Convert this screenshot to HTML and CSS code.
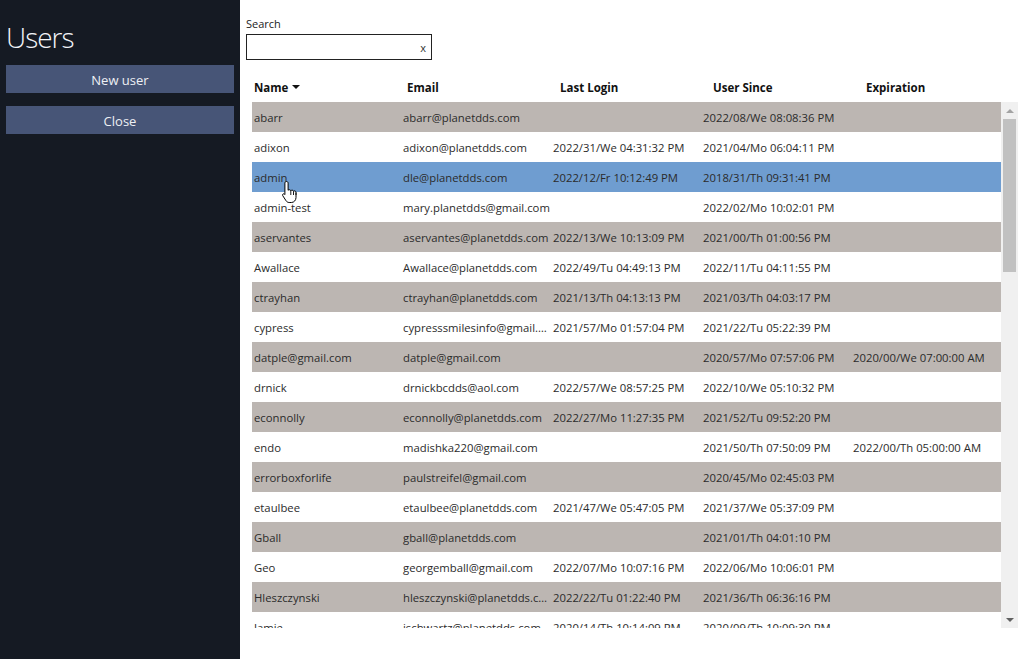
FILE: index.html
```html
<!DOCTYPE html>
<html lang="en">
<head>
  <meta charset="UTF-8">
  <title>Users</title>
  <link rel="stylesheet" href="styles.css">
</head>
<body>
  <div id="app">
    <aside class="sidebar">
      <h1 class="title">Users</h1>
      <button class="side-btn">New user</button>
      <button class="side-btn">Close</button>
    </aside>

    <main class="main">
      <div class="search">
        <label class="search-label" for="searchBox">Search</label>
        <div class="search-box">
          <input id="searchBox" type="text">
          <span class="search-clear">x</span>
        </div>
      </div>

      <div class="grid">
        <div class="grid-head">
          <div class="hcell">Name <span class="sort-arrow"></span></div>
          <div class="hcell">Email</div>
          <div class="hcell">Last Login</div>
          <div class="hcell">User Since</div>
          <div class="hcell">Expiration</div>
        </div>

        <div class="grid-body">
          <div class="rows" id="rows"></div>
          <div class="scrollbar">
            <div class="sb-arrow sb-up"></div>
            <div class="sb-track"><div class="sb-thumb"></div></div>
            <div class="sb-arrow sb-down"></div>
          </div>

          <svg class="cursor" width="20" height="24" viewBox="0 0 20 24">
            <path d="M5.5 1.5c1 0 1.6.7 1.6 1.6v7.2c.3-.9 2.6-.8 2.7.5.3-1 2.6-.9 2.7.6.4-.9 2.5-.6 2.5.9v5.2c0 2.6-1.9 5-4.6 5H8.2c-1.5 0-2.4-.7-3.2-1.8L1.7 15.6c-.8-1.2.9-2.5 2-1.4l.2.3V3.1c0-.9.6-1.6 1.6-1.6z" fill="#fff" stroke="#000" stroke-width="1"/>
            <path d="M9.8 11v4M12.5 11.5v3.5M15 12.5v2.5" stroke="#000" stroke-width="0.9"/>
          </svg>
        </div>
      </div>
    </main>
  </div>

  <script>
    const users = [
      ['abarr', 'abarr@planetdds.com', '', '2022/08/We 08:08:36 PM', ''],
      ['adixon', 'adixon@planetdds.com', '2022/31/We 04:31:32 PM', '2021/04/Mo 06:04:11 PM', ''],
      ['admin', 'dle@planetdds.com', '2022/12/Fr 10:12:49 PM', '2018/31/Th 09:31:41 PM', ''],
      ['admin-test', 'mary.planetdds@gmail.com', '', '2022/02/Mo 10:02:01 PM', ''],
      ['aservantes', 'aservantes@planetdds.com', '2022/13/We 10:13:09 PM', '2021/00/Th 01:00:56 PM', ''],
      ['Awallace', 'Awallace@planetdds.com', '2022/49/Tu 04:49:13 PM', '2022/11/Tu 04:11:55 PM', ''],
      ['ctrayhan', 'ctrayhan@planetdds.com', '2021/13/Th 04:13:13 PM', '2021/03/Th 04:03:17 PM', ''],
      ['cypress', 'cypresssmilesinfo@gmail.com', '2021/57/Mo 01:57:04 PM', '2021/22/Tu 05:22:39 PM', ''],
      ['datple@gmail.com', 'datple@gmail.com', '', '2020/57/Mo 07:57:06 PM', '2020/00/We 07:00:00 AM'],
      ['drnick', 'drnickbcdds@aol.com', '2022/57/We 08:57:25 PM', '2022/10/We 05:10:32 PM', ''],
      ['econnolly', 'econnolly@planetdds.com', '2022/27/Mo 11:27:35 PM', '2021/52/Tu 09:52:20 PM', ''],
      ['endo', 'madishka220@gmail.com', '', '2021/50/Th 07:50:09 PM', '2022/00/Th 05:00:00 AM'],
      ['errorboxforlife', 'paulstreifel@gmail.com', '', '2020/45/Mo 02:45:03 PM', ''],
      ['etaulbee', 'etaulbee@planetdds.com', '2021/47/We 05:47:05 PM', '2021/37/We 05:37:09 PM', ''],
      ['Gball', 'gball@planetdds.com', '', '2021/01/Th 04:01:10 PM', ''],
      ['Geo', 'georgemball@gmail.com', '2022/07/Mo 10:07:16 PM', '2022/06/Mo 10:06:01 PM', ''],
      ['Hleszczynski', 'hleszczynski@planetdds.com', '2022/22/Tu 01:22:40 PM', '2021/36/Th 06:36:16 PM', ''],
      ['Jamie', 'jschwartz@planetdds.com', '2020/14/Th 10:14:09 PM', '2020/09/Th 10:09:30 PM', '']
    ];
    const selected = 2;

    const rows = document.getElementById('rows');
    users.forEach((u, i) => {
      const row = document.createElement('div');
      row.className = 'row' + (i % 2 === 0 ? ' alt' : '') + (i === selected ? ' selected' : '');
      u.forEach(v => {
        const c = document.createElement('div');
        c.className = 'cell';
        c.textContent = v;
        row.appendChild(c);
      });
      rows.appendChild(row);
    });
  </script>
</body>
</html>
```

FILE: styles.css
```css
:root {
  --side-bg: #151a23;
  --btn-bg: #475577;
  --row-alt: #bcb6b2;
  --row-sel: #6f9dd0;
  --text: #2b2b2b;
  --font: 'Open Sans', 'Noto Sans', sans-serif;
}
* {
  margin: 0;
  padding: 0;
  box-sizing: border-box;
  font-family: var(--font);
}
body {
  overflow: hidden;
  background: #fff;
}
#app {
  display: flex;
  height: 100vh;
}

/* Sidebar */
.sidebar {
  width: 240px;
  flex-shrink: 0;
  background: var(--side-bg);
  padding: 19px 6px 0;
  display: flex;
  flex-direction: column;
}
.title {
  color: #f2f4f8;
  font-size: 28px;
  font-weight: 300;
  letter-spacing: -1px;
  line-height: 36px;
  padding-left: 0;
  margin-bottom: 10px;
}
.side-btn {
  height: 28px;
  margin-bottom: 13px;
  border: none;
  background: var(--btn-bg);
  color: #eef0f4;
  font-size: 13px;
  padding-top: 1px;
  cursor: pointer;
}

/* Main */
.main {
  flex: 1;
  padding: 16px 12px 0 6px;
  display: flex;
  flex-direction: column;
}
.search {
  display: flex;
  flex-direction: column;
}
.search-label {
  font-size: 11px;
  color: #222;
  line-height: 15px;
  margin-bottom: 3px;
}
.search-box {
  width: 186px;
  height: 26px;
  border: 1px solid #222;
  display: flex;
  align-items: center;
}
.search-box input {
  flex: 1;
  min-width: 0;
  height: 100%;
  border: none;
  outline: none;
  padding: 0 4px;
  font-size: 12px;
}
.search-clear {
  font-size: 11px;
  color: #333;
  padding: 0 5px 0 2px;
}

/* Grid */
.grid {
  margin-top: 14px;
  padding-left: 6px;
}
.grid-head {
  display: grid;
  grid-template-columns: repeat(5, 153px);
  height: 28px;
  align-items: center;
  padding-bottom: 2px;
}
.hcell {
  font-size: 11.5px;
  font-weight: 700;
  color: #111;
  padding-left: 2px;
  display: flex;
  align-items: center;
  gap: 4px;
}
.sort-arrow {
  width: 0;
  height: 0;
  border-left: 4px solid transparent;
  border-right: 4px solid transparent;
  border-top: 4px solid #111;
}
.grid-body {
  position: relative;
  display: flex;
  height: 526px;
}
.rows {
  width: 749px;
  overflow: hidden;
}
.row {
  display: grid;
  grid-template-columns: 150px 150px 150px 150px 149px;
  height: 30px;
  align-items: center;
  background: #fff;
}
.row.alt {
  background: var(--row-alt);
}
.row.selected {
  background: var(--row-sel);
}
.cell {
  font-size: 11.3px;
  color: var(--text);
  padding-left: 1px;
  white-space: nowrap;
  overflow: hidden;
  text-overflow: ellipsis;
}
.cell:first-child {
  padding-left: 2px;
}

/* Scrollbar */
.scrollbar {
  width: 17px;
  background: #f0f0f0;
  display: flex;
  flex-direction: column;
}
.sb-arrow {
  height: 17px;
  display: flex;
  align-items: center;
  justify-content: center;
}
.sb-arrow::before {
  content: '';
  border-left: 4px solid transparent;
  border-right: 4px solid transparent;
}
.sb-up::before {
  border-bottom: 4px solid #a3a3a3;
}
.sb-down::before {
  border-top: 4px solid #606060;
}
.sb-track {
  flex: 1;
  padding: 0 2px;
}
.sb-thumb {
  height: 153px;
  background: #c1c1c1;
}

/* Mouse pointer over the selected row */
.cursor {
  position: absolute;
  left: 29px;
  top: 78px;
}
```
